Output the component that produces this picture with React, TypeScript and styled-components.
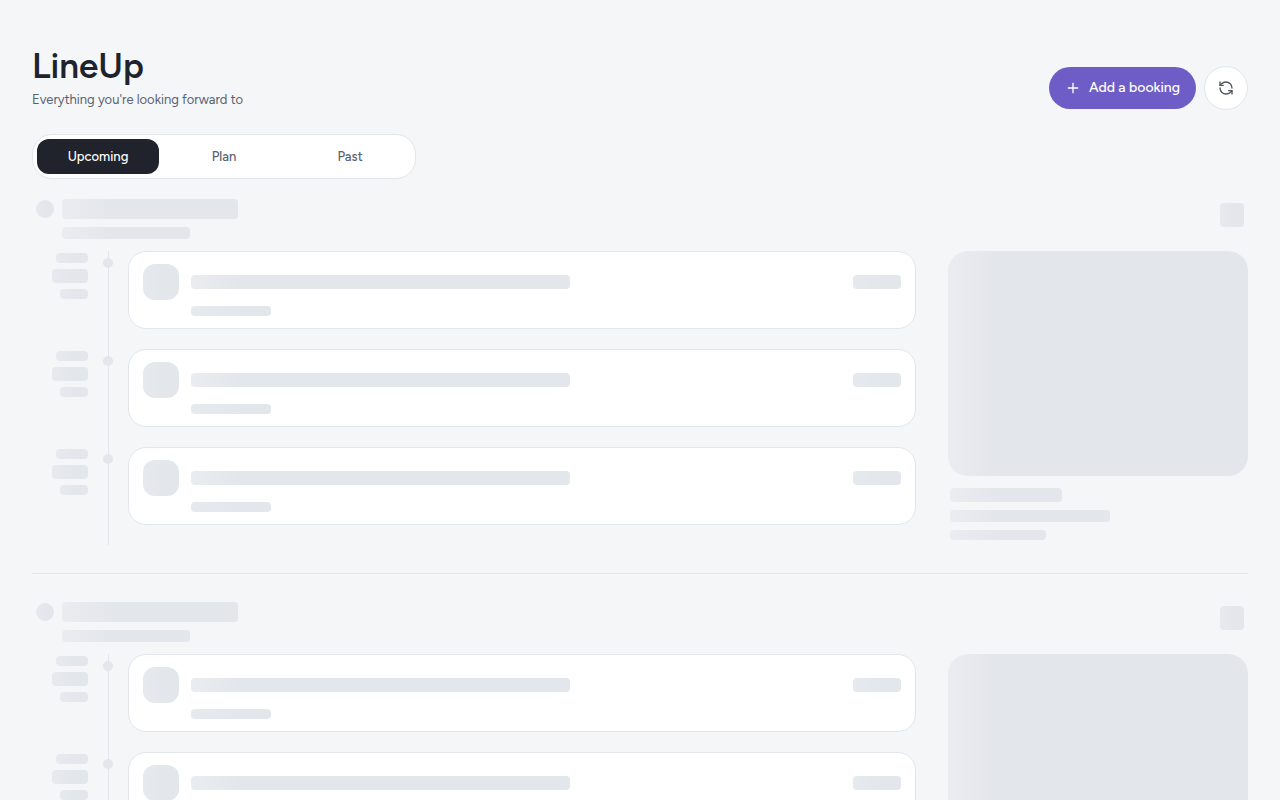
import React, { useState } from "react";
import styled, { createGlobalStyle } from "styled-components";
import { Plus, RefreshCcw } from "lucide-react";

const color = {
  page: "#f4f6f8",
  surface: "#ffffff",
  line: "#e2e6ea",
  ink: "#20232c",
  muted: "#596270",
  icon: "#51565e",
  accent: "#6e5dc6",
  bone: "#e3e6eb",
  boneSoft: "#e6e9ed",
  boneLight: "#eaecf0",
};

const GlobalStyle = createGlobalStyle`
  *, *::before, *::after { box-sizing: border-box; }
  body {
    margin: 0;
    background: ${color.page};
    color: ${color.ink};
    font-family: Figtree, Lato, "Liberation Sans", sans-serif;
  }
  button { font-family: inherit; cursor: pointer; }
`;

const Page = styled.main`
  padding: 44px 32px 32px;
  height: 100vh;
  overflow: hidden;
`;

const Header = styled.header`
  display: flex;
  justify-content: space-between;
  align-items: flex-end;
  margin-bottom: 24px;
`;

const Title = styled.h1`
  margin: 0;
  font-size: 35px;
  line-height: 44px;
  font-weight: 600;
`;

const Subtitle = styled.p`
  margin: 2px 0 0;
  font-size: 13px;
  line-height: 20px;
  color: ${color.muted};
`;

const Actions = styled.div`
  display: flex;
  align-items: center;
  gap: 8px;
`;

const AddButton = styled.button`
  display: flex;
  align-items: center;
  gap: 8px;
  height: 42px;
  padding: 0 16px 1px;
  border: 0;
  border-radius: 21px;
  background: ${color.accent};
  color: #fff;
  font-size: 14px;
  font-weight: 500;
`;

const RoundButton = styled.button`
  display: grid;
  place-items: center;
  width: 44px;
  height: 44px;
  padding: 0;
  border: 1px solid ${color.line};
  border-radius: 50%;
  background: ${color.surface};
  color: ${color.icon};
`;

const Tabs = styled.nav`
  display: grid;
  grid-template-columns: repeat(3, 1fr);
  gap: 4px;
  max-width: 384px;
  padding: 4px;
  margin-bottom: 20px;
  border: 1px solid ${color.line};
  border-radius: 20px;
  background: ${color.surface};
`;

const Tab = styled.button<{ $active: boolean }>`
  height: 35px;
  padding: 0;
  border: 0;
  border-radius: 12px;
  background: ${(p) => (p.$active ? color.ink : "transparent")};
  color: ${(p) => (p.$active ? "#fff" : color.muted)};
  font-size: 13px;
  font-weight: 500;
`;

const Bone = styled.div<{ $w: string; $h: number; $r?: number; $soft?: boolean }>`
  flex: none;
  width: ${(p) => p.$w};
  height: ${(p) => p.$h}px;
  border-radius: ${(p) => p.$r ?? 4}px;
  background: linear-gradient(
    90deg,
    ${(p) => (p.$soft ? color.boneSoft : color.boneLight)},
    ${color.bone} min(60%, 48px)
  );
`;

const Section = styled.section`
  & + & {
    margin-top: 28px;
    padding-top: 28px;
    border-top: 1px solid ${color.line};
  }
`;

const SectionHead = styled.div`
  display: flex;
  align-items: flex-start;
  gap: 8px;
  padding: 0 4px;
  margin-bottom: 12px;
`;

const HeadDot = styled.div`
  padding-top: 1px;
`;

const HeadText = styled.div`
  flex: 1;
  display: grid;
  gap: 8px;
`;

const HeadAction = styled.div`
  padding-top: 4px;
`;

const Columns = styled.div`
  display: grid;
  grid-template-columns: 1fr 300px;
  gap: 32px;
  align-items: start;
`;

const Entry = styled.div`
  display: grid;
  grid-template-columns: 56px 40px 1fr;
`;

const Times = styled.div`
  display: flex;
  flex-direction: column;
  align-items: flex-end;
  gap: 6px;
  padding-top: 2px;
`;

const Rail = styled.div`
  display: flex;
  justify-content: center;
  padding-top: 7px;
  background: linear-gradient(${color.line}, ${color.line}) 20px 0 / 1px 100% no-repeat;
`;

const Dot = styled.div`
  width: 10px;
  height: 10px;
  border-radius: 50%;
  background: ${color.bone};
`;

const Card = styled.div`
  margin-bottom: 20px;
  padding: 12px 14px;
  border: 1px solid ${color.line};
  border-radius: 18px;
  background: ${color.surface};
`;

const CardTop = styled.div`
  display: flex;
  align-items: center;
  gap: 12px;
`;

const CardPrice = styled.div`
  margin-left: auto;
`;

const CardSub = styled.div`
  padding: 6px 0 0 48px;
`;

const MapBone = styled(Bone)`
  height: auto;
  aspect-ratio: 4 / 3;
`;

const AsideText = styled.div`
  display: grid;
  gap: 8px;
  padding: 12px 2px 0;
`;

function EntrySkeleton() {
  return (
    <Entry>
      <Times>
        <Bone $w="32px" $h={10} $soft />
        <Bone $w="36px" $h={14} $soft />
        <Bone $w="28px" $h={10} $soft />
      </Times>
      <Rail>
        <Dot />
      </Rail>
      <Card>
        <CardTop>
          <Bone $w="36px" $h={36} $r={12} $soft />
          <Bone $w="50%" $h={14} />
          <CardPrice>
            <Bone $w="48px" $h={14} $soft />
          </CardPrice>
        </CardTop>
        <CardSub>
          <Bone $w="80px" $h={10} $soft />
        </CardSub>
      </Card>
    </Entry>
  );
}

function TripSkeleton() {
  return (
    <Section aria-hidden="true">
      <SectionHead>
        <HeadDot>
          <Bone $w="18px" $h={18} $r={9} $soft />
        </HeadDot>
        <HeadText>
          <Bone $w="176px" $h={20} />
          <Bone $w="128px" $h={12} />
        </HeadText>
        <HeadAction>
          <Bone $w="24px" $h={24} $soft />
        </HeadAction>
      </SectionHead>
      <Columns>
        <div>
          <EntrySkeleton />
          <EntrySkeleton />
          <EntrySkeleton />
        </div>
        <aside>
          <MapBone $w="100%" $h={225} $r={20} />
          <AsideText>
            <Bone $w="112px" $h={14} />
            <Bone $w="160px" $h={12} />
            <Bone $w="96px" $h={10} />
          </AsideText>
        </aside>
      </Columns>
    </Section>
  );
}

const tabs = ["Upcoming", "Plan", "Past"];

export default function App() {
  const [active, setActive] = useState(tabs[0]);
  return (
    <>
      <GlobalStyle />
      <Page>
        <Header>
          <div>
            <Title>LineUp</Title>
            <Subtitle>Everything you're looking forward to</Subtitle>
          </div>
          <Actions>
            <AddButton type="button">
              <Plus size={16} strokeWidth={2} aria-hidden="true" />
              Add a booking
            </AddButton>
            <RoundButton type="button" aria-label="Refresh">
              <RefreshCcw size={16} strokeWidth={2} aria-hidden="true" />
            </RoundButton>
          </Actions>
        </Header>
        <Tabs aria-label="Views">
          {tabs.map((name) => (
            <Tab
              key={name}
              type="button"
              $active={name === active}
              aria-pressed={name === active}
              onClick={() => setActive(name)}
            >
              {name}
            </Tab>
          ))}
        </Tabs>
        <TripSkeleton />
        <TripSkeleton />
      </Page>
    </>
  );
}
